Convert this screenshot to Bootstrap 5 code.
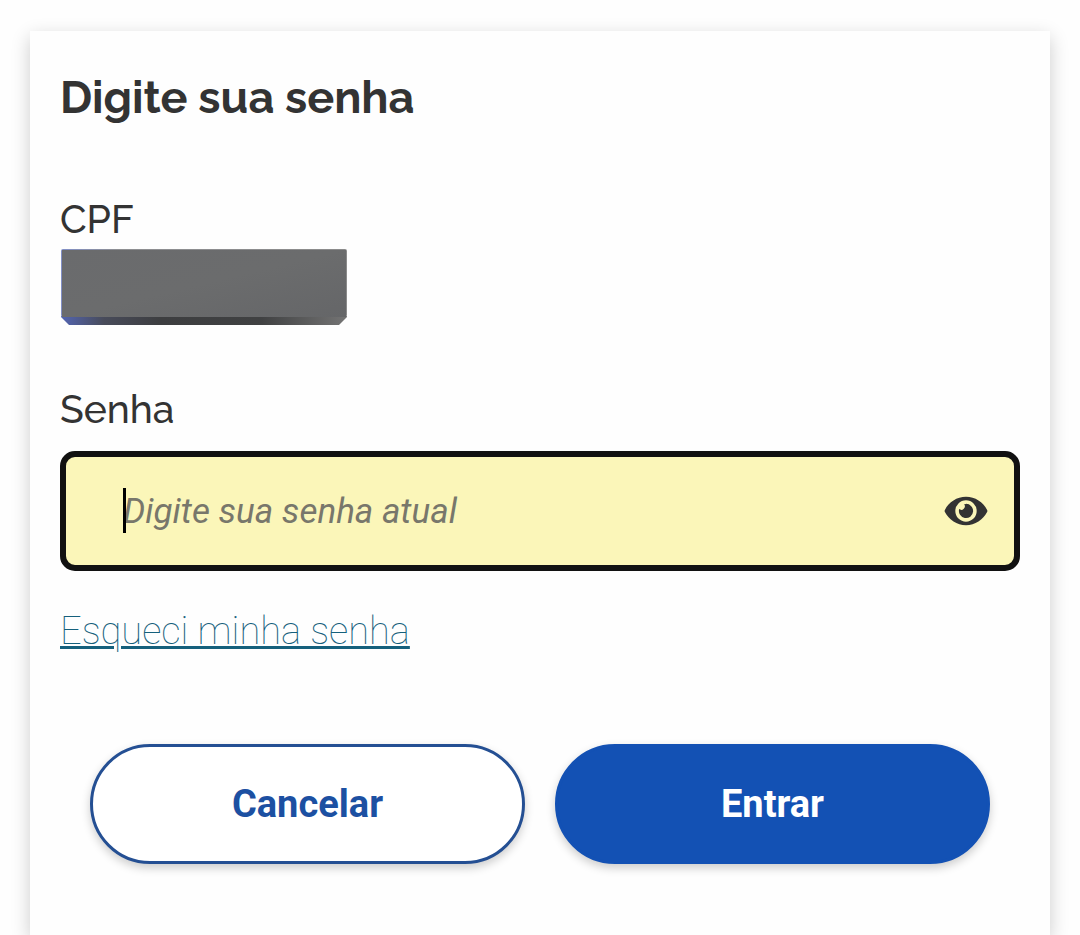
<!DOCTYPE html>
<html lang="pt-BR">
<head>
<meta charset="utf-8">
<meta name="viewport" content="width=device-width, initial-scale=1">
<title>Digite sua senha</title>
<link href="https://cdn.jsdelivr.net/npm/bootstrap@5.3.0/dist/css/bootstrap.min.css" rel="stylesheet">
<style>
  body { background: #fefefe; color: #333; font-family: Roboto, sans-serif; font-size: 38px; line-height: 48px; }
  .page { padding: 31px 30px 0; }
  .login-card { background: #fefefe; border: 0; border-radius: 0; padding: 37px 30px 60px; box-shadow: 0 6px 18px rgba(0, 0, 0, .2); }
  .login-title, .field-label { font-family: Raleway, Lato, sans-serif; color: #333; }
  .login-title { font-size: 45px; font-weight: 700; line-height: 60px; margin-bottom: 67px; }
  .field-label { font-size: 39px; font-weight: 500; line-height: 48px; margin: 0; }
  .cpf-mask { display: block; width: 286px; height: 76px; margin: 6px 0 60px 1px; }
  .senha-input, .senha-input:focus { height: 120px; margin-top: 18px; padding: 0 90px 0 57px; border: 6px solid #111; border-radius: 15px; background: #fbf6b9; font-size: 35px; line-height: 45px; color: #333; caret-color: transparent; box-shadow: none; }
  .senha-input::placeholder { color: #78776b; font-style: italic; opacity: 1; }
  .text-cursor { position: absolute; left: 63px; bottom: 38px; width: 3px; height: 45px; background: #000; }
  .senha-input:not(:placeholder-shown) { caret-color: #000; }
  .senha-input:not(:placeholder-shown) ~ .text-cursor { display: none; }
  .toggle-senha { position: absolute; right: 32px; bottom: 36px; height: 48px; padding: 0; border: 0; background: none; color: #333; display: flex; align-items: center; }
  .forgot-row { margin-top: 36px; }
  .forgot { font-weight: 100; color: #15607c; text-decoration-thickness: 3px; }
  .forgot:hover { color: #15607c; }
  .actions { gap: 30px; padding: 0 30px; margin-top: 89px; }
  .actions .btn { flex: 1 1 0; height: 120px; border: 3px solid #1351b4; border-radius: 60px; font-size: 38px; font-weight: 700; line-height: 48px; box-shadow: 0 4px 10px rgba(0, 0, 0, .2); }
  .btn-cancelar, .btn-cancelar:hover { background: #fff; color: #1c50a2; border-color: #244f93 !important; }
  .btn-entrar, .btn-entrar:hover { background: #1351b4; color: #fff; }
</style>
</head>
<body>
<main class="page d-flex flex-column min-vh-100">
  <form class="login-card card flex-grow-1">
    <h1 class="login-title">Digite sua senha</h1>
    <p class="field-label">CPF</p>
    <svg class="cpf-mask" viewBox="0 0 286 76" role="img" aria-label="CPF oculto">
      <defs>
        <linearGradient id="face" x2="1" y2="1"><stop stop-color="#6a6b6d"/><stop offset=".5" stop-color="#6b6c6d"/><stop offset="1" stop-color="#656668"/></linearGradient>
        <linearGradient id="edge"><stop stop-color="#5365b2"/><stop offset=".15" stop-color="#484b5a"/><stop offset=".35" stop-color="#3d3e40"/><stop offset=".7" stop-color="#404142"/><stop offset="1" stop-color="#747474"/></linearGradient>
        <linearGradient id="rim"><stop stop-color="#8290c8"/><stop offset=".2" stop-color="#8e8f92"/><stop offset="1" stop-color="#8b8b8b"/></linearGradient>
      </defs>
      <path d="M0 67h286v1l-8 8H8l-8-8z" fill="url(#edge)"/>
      <rect width="286" height="68" rx="2" fill="url(#rim)"/>
      <rect x="1" y="1" width="284" height="67" fill="url(#face)"/>
    </svg>
    <div class="position-relative">
      <label class="field-label d-block" for="senha">Senha</label>
      <input class="senha-input form-control" type="password" id="senha" placeholder="Digite sua senha atual">
      <span class="text-cursor"></span>
      <button class="toggle-senha" type="button" aria-label="Mostrar senha">
        <svg width="44" height="38" viewBox="0 0 576 512" fill="currentColor" aria-hidden="true"><path d="M572.52 241.4C518.29 135.59 410.93 64 288 64S57.68 135.64 3.48 241.41a32.35 32.35 0 0 0 0 29.19C57.71 376.41 165.07 448 288 448s230.32-71.64 284.52-177.41a32.35 32.35 0 0 0 0-29.19zM288 400a144 144 0 1 1 144-144 143.93 143.93 0 0 1-144 144zm0-240a95.31 95.31 0 0 0-25.31 3.79 47.85 47.85 0 0 1-66.9 66.9A95.78 95.78 0 1 0 288 160z"/></svg>
      </button>
    </div>
    <div class="forgot-row"><a class="forgot" href="#">Esqueci minha senha</a></div>
    <div class="actions d-flex">
      <button class="btn btn-cancelar" type="button">Cancelar</button>
      <button class="btn btn-entrar" type="submit">Entrar</button>
    </div>
  </form>
</main>
<script src="https://cdn.jsdelivr.net/npm/bootstrap@5.3.0/dist/js/bootstrap.bundle.min.js"></script>
</body>
</html>
